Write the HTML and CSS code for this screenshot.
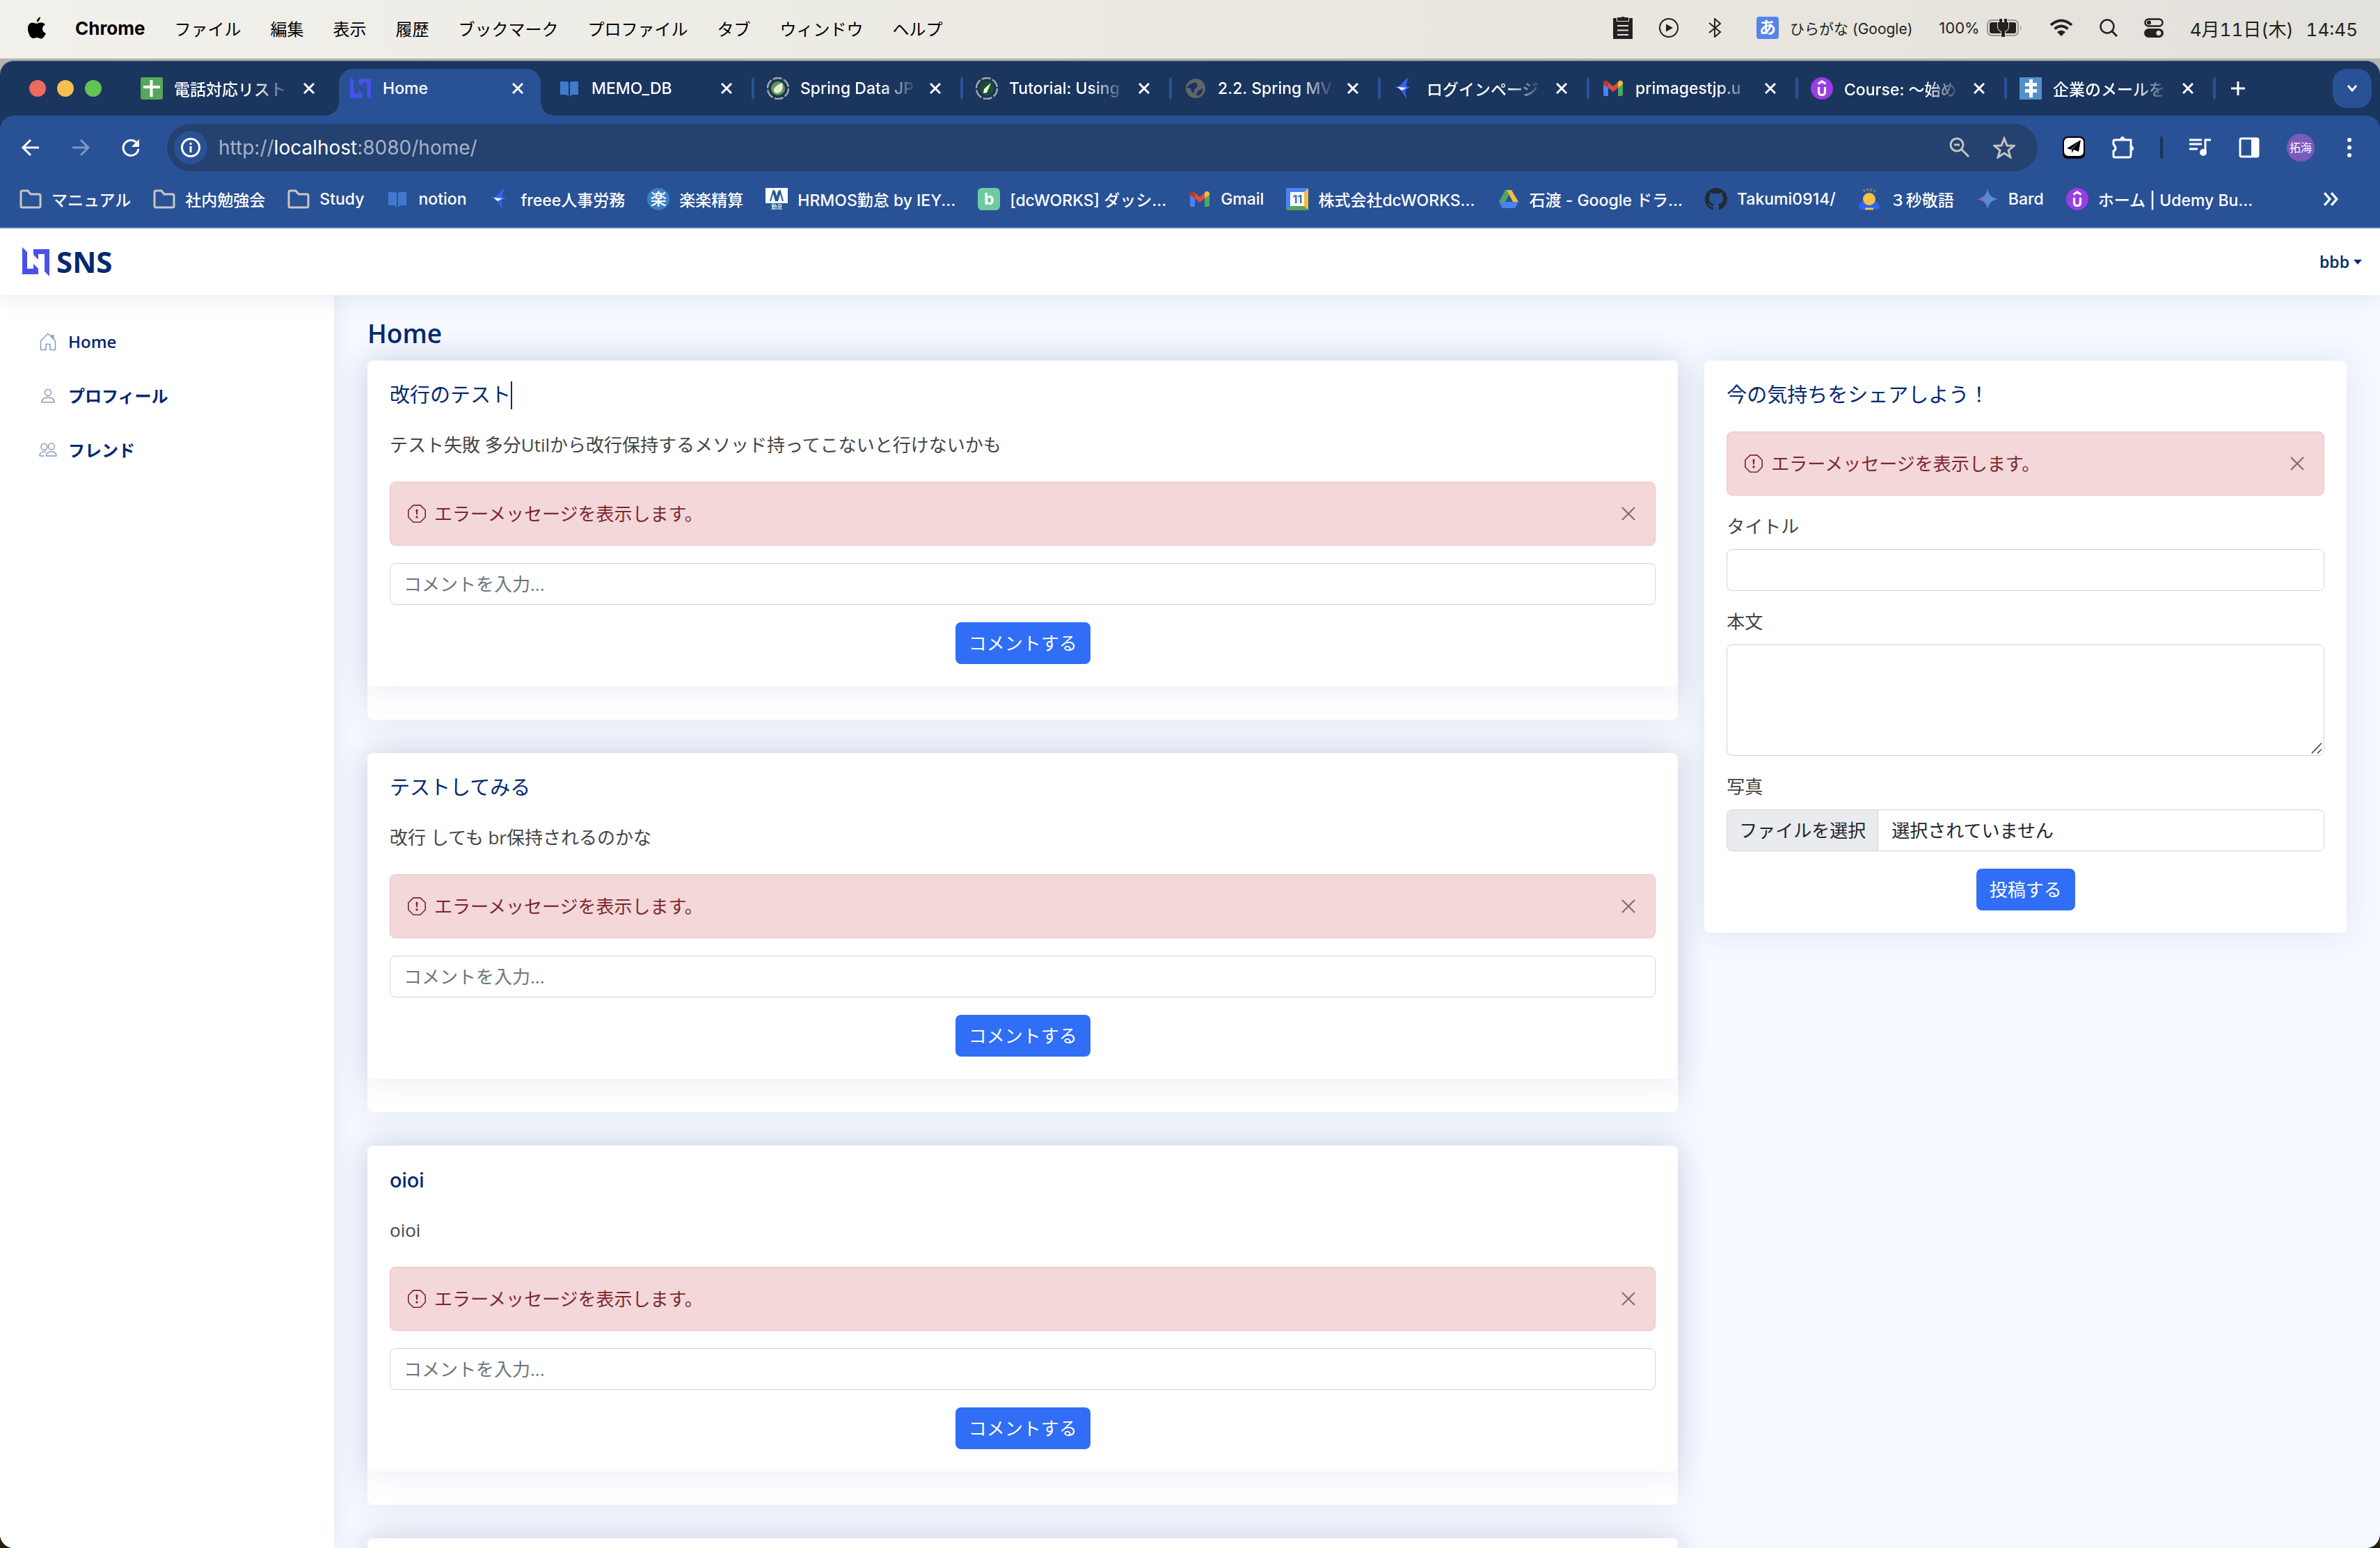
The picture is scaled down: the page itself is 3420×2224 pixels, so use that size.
FILE: index.html
```html
<!DOCTYPE html>
<html lang="ja">
<head>
<meta charset="utf-8">
<title>Home</title>
<link rel="stylesheet" href="styles.css">
</head>
<body>
<svg class="sprite" aria-hidden="true">
  <defs>
    <linearGradient id="bard-fill" x1="0" x2="1"><stop offset=".1" stop-color="#9a62b8"/><stop offset=".6" stop-color="#4b93d6"/></linearGradient>
  </defs>
  <symbol id="i-close" viewBox="0 0 16 16"><path d="M1 1l14 14M15 1L1 15" fill="none" stroke="currentColor" stroke-width="3"/></symbol>
  <symbol id="i-logo" viewBox="0 0 39 42"><path fill="#4951ec" d="M0 0l7 7v24h9v-7l7 7v8H0zM16 3h23v39l-7-7V10H23v8l-7-7z"/></symbol>
  <symbol id="i-book" viewBox="0 0 32 32"><path fill="#4179cd" d="M3 6h9q3 0 3 3v19l-3-3H3zM29 6h-9q-3 0-3 3v19l3-3h9z"/></symbol>
  <symbol id="i-folder" viewBox="0 0 32 32"><path d="M2 26V6q0-2 2-2h8l4 5h12q2 0 2 2v15q0 2-2 2H4q-2 0-2-2z" fill="none" stroke="#c9c6c2" stroke-width="3"/></symbol>
  <symbol id="i-swallow" viewBox="0 0 32 32"><path fill="#3563ee" d="M22 0q-3 8-3 12l5 3-6 3q-1 5 2 13-6-6-9-14L2 14l8-2q6-8 12-12z"/><path fill="#fff" d="M6 14l13 1-7 4z"/></symbol>
  <symbol id="i-gmail" viewBox="0 0 32 32"><path fill="#4b83ec" d="M2 9l7 5v13H4q-2 0-2-2z"/><path fill="#53a758" d="M30 9l-7 5v13h5q2 0 2-2z"/><path fill="#e04c3c" d="M9 7l7 6 7-6v8l-7 6-7-6z"/><path fill="#b9362b" d="M2 8q1-4 5-3l2 2v8l-7-5z"/><path fill="#f3bd3b" d="M30 8q-1-4-5-3l-2 2v8l7-5z"/></symbol>
  <symbol id="i-udemy" viewBox="0 0 32 32"><circle cx="16" cy="16" r="16" fill="#9a3ee3"/><path d="M10.500 9.500l5.500-3.500 5.500 3.500M11.500 14v7q0 4.500 4.500 4.500t4.500-4.500v-7" fill="none" stroke="#fff" stroke-width="3.200"/></symbol>
  <symbol id="i-alert" viewBox="0 0 16 16"><path fill="currentColor" d="M4.540.146A.5.500 0 0 1 4.893 0h6.214a.5.500 0 0 1 .353.146l4.394 4.394a.5.500 0 0 1 .146.353v6.214a.5.500 0 0 1-.146.353l-4.394 4.394a.5.500 0 0 1-.353.146H4.893a.5.500 0 0 1-.353-.146L.146 11.460A.5.500 0 0 1 0 11.107V4.893a.5.500 0 0 1 .146-.353L4.540.146zM5.100 1 1 5.100v5.800L5.100 15h5.800l4.100-4.100V5.100L10.900 1H5.100z"/><path fill="currentColor" d="M7.002 11a1 1 0 1 1 2 0 1 1 0 0 1-2 0zM7.100 4.995a.905.905 0 1 1 1.800 0l-.35 3.507a.552.552 0 0 1-1.100 0L7.100 4.995z"/></symbol>
</svg>

<header class="menubar">
  <nav class="menubar-menus">
    <svg class="apple" viewBox="0 0 26 32"><path d="M18 0q0 5-5 8-1-5 5-8zM13 10q5-3 9-1 2 1 3 2-4 3-4 6 0 5 5 7-2 5-5 7-2 1-4 0-4-2-8 0-3 1-6-3Q-2 18 1 12q3-5 8-3z"/></svg>
    <strong>Chrome</strong><span>ファイル</span><span>編集</span><span>表示</span><span>履歴</span><span>ブックマーク</span><span>プロファイル</span><span>タブ</span><span>ウィンドウ</span><span>ヘルプ</span>
  </nav>
  <div class="menubar-status">
    <svg width="28" height="32" viewBox="0 0 28 32"><path d="M0 2h5v5h18V2h5v30H0z"/><path d="M6 1h5q3-2 6 0h5v5H6z"/><path d="M6 13h16M6 19.500h16M6 26h16" stroke="#e8e6df" stroke-width="2"/></svg>
    <svg width="28" height="28" viewBox="0 0 28 28"><circle cx="14" cy="14" r="13" fill="none" stroke="currentColor" stroke-width="2"/><path d="M10 8.500v11l10-5.500z"/></svg>
    <svg class="bluetooth" width="28" height="28" viewBox="0 0 28 28"><path d="M6 7l16 13-8 7V1l8 7L6 21" fill="none" stroke="currentColor" stroke-width="2"/></svg>
    <span class="ime"><b>あ</b>ひらがな (Google)</span>
    <span class="power">100%<svg width="52" height="26" viewBox="0 0 52 26"><rect x="1" y="2" width="44" height="22" rx="6" fill="none" stroke="#999892" stroke-width="2"/><rect x="4" y="5" width="38" height="16" rx="3"/><path d="M48 9q3 4 0 8z" fill="#999892"/><path d="M18 0h4v5h3V0h4v5h2v7q0 4-5 6v8h-5v-8q-5-2-5-6V5h2z" stroke="#e5e3dd" stroke-width="2" paint-order="stroke"/></svg></span>
    <svg width="34" height="26" viewBox="0 0 34 26"><path d="M2 9Q17-4 32 9M7.500 14.500q9.500-8 19 0" fill="none" stroke="currentColor" stroke-width="4"/><path d="M11 19q6-5 12 0l-6 6z"/></svg>
    <svg width="26" height="26" viewBox="0 0 26 26"><circle cx="11" cy="11" r="9.500" fill="none" stroke="currentColor" stroke-width="2.500"/><path d="M18 18l7 7" stroke="currentColor" stroke-width="3"/></svg>
    <svg width="28" height="28" viewBox="0 0 28 28"><rect x="1.500" y="1.500" width="25" height="10" rx="5" fill="none" stroke="currentColor" stroke-width="2.500"/><circle cx="7" cy="6.500" r="3"/><rect y="15" width="28" height="13" rx="6.500"/><circle cx="21" cy="21.500" r="3.500" fill="#e5e3dd"/></svg>
    <time class="clock"><span>4月11日(木)</span><span>14:45</span></time>
  </div>
</header>

<div class="window">
  <div class="tabstrip">
    <div class="lights"><i class="red"></i><i class="yellow"></i><i class="green"></i></div>
    <div class="tab"><svg class="ico" viewBox="0 0 32 32"><rect width="32" height="32" rx="3" fill="#58a65c"/><path d="M13.500 4h4v8H28v4H17.500v12h-4V16H4v-4h9.500z" fill="#fff"/></svg><span class="tab-title">電話対応リスト</span><button class="tab-close" aria-label="閉じる"><svg><use href="#i-close"/></svg></button></div>
    <div class="tab active"><svg class="ico"><use href="#i-logo"/></svg><span class="tab-title">Home</span><button class="tab-close" aria-label="閉じる"><svg><use href="#i-close"/></svg></button></div>
    <div class="tab sep"><svg class="ico"><use href="#i-book"/></svg><span class="tab-title">MEMO_DB</span><button class="tab-close" aria-label="閉じる"><svg><use href="#i-close"/></svg></button></div>
    <div class="tab sep"><svg class="ico" viewBox="0 0 32 32"><circle cx="16" cy="16" r="15" fill="none" stroke="#a3a9a8" stroke-width="2.500" stroke-dasharray="13 2.700"/><circle cx="16" cy="16" r="10" fill="#629b46"/><path fill="#e5eade" d="M22 8q3 14-8 15-5-1-4-6 2-5 12-9z"/></svg><span class="tab-title">Spring Data JP</span><button class="tab-close" aria-label="閉じる"><svg><use href="#i-close"/></svg></button></div>
    <div class="tab sep"><svg class="ico" viewBox="0 0 32 32"><circle cx="16" cy="16" r="15" fill="none" stroke="#a3a9a8" stroke-width="2.500" stroke-dasharray="13 2.700"/><circle cx="16" cy="16" r="10" fill="#1f5127"/><path fill="#fff" d="M22 8l-6 14-5 1 1-6z"/></svg><span class="tab-title">Tutorial: Using</span><button class="tab-close" aria-label="閉じる"><svg><use href="#i-close"/></svg></button></div>
    <div class="tab sep"><svg class="ico" viewBox="0 0 32 32"><circle cx="16" cy="16" r="14" fill="#636466"/><path fill="#1a355e" d="M7 11q6-5 10-3l2 5-4 4-2 6q-4-3-4-7l-6-1zM19 20l7-4q1 6-6 11l-3-2z"/></svg><span class="tab-title">2.2. Spring MV</span><button class="tab-close" aria-label="閉じる"><svg><use href="#i-close"/></svg></button></div>
    <div class="tab sep"><svg class="ico"><use href="#i-swallow"/></svg><span class="tab-title">ログインページ</span><button class="tab-close" aria-label="閉じる"><svg><use href="#i-close"/></svg></button></div>
    <div class="tab sep"><svg class="ico"><use href="#i-gmail"/></svg><span class="tab-title">primagestjp.u</span><button class="tab-close" aria-label="閉じる"><svg><use href="#i-close"/></svg></button></div>
    <div class="tab sep"><svg class="ico"><use href="#i-udemy"/></svg><span class="tab-title">Course: 〜始め</span><button class="tab-close" aria-label="閉じる"><svg><use href="#i-close"/></svg></button></div>
    <div class="tab sep"><svg class="ico" viewBox="0 0 32 32"><path fill="#5290cb" d="M0 0h32v32H0z"/><path d="M16.500 3v26M8 10.500h17M8 19.500h17" stroke="#fff" stroke-width="5"/></svg><span class="tab-title">企業のメールを</span><button class="tab-close" aria-label="閉じる"><svg><use href="#i-close"/></svg></button></div>
    <button class="new-tab" aria-label="新しいタブ"><svg viewBox="0 0 20 20"><path d="M10 0v20M0 10h20" stroke="currentColor" stroke-width="3"/></svg></button>
    <button class="tab-search" aria-label="タブを検索"><svg viewBox="0 0 16 16"><path d="M2 4l6 7 6-7" fill="none" stroke="currentColor" stroke-width="3"/></svg></button>
  </div>

  <div class="browserbar">
    <div class="toolbar">
      <div class="nav-buttons">
        <button aria-label="戻る"><svg class="ico" viewBox="0 0 32 32"><path d="M28 16H6M16 5L5 16l11 11" fill="none" stroke="currentColor" stroke-width="3"/></svg></button>
        <button class="dim" aria-label="進む"><svg class="ico" viewBox="0 0 32 32"><path d="M4 16h22M16 5l11 11-11 11" fill="none" stroke="currentColor" stroke-width="3"/></svg></button>
        <button aria-label="再読み込み"><svg class="ico" viewBox="0 0 32 32"><path d="M25 10a11 11 0 1 0 2 8" fill="none" stroke="currentColor" stroke-width="3"/><path d="M28 4v11H17z" fill="currentColor"/></svg></button>
      </div>
      <div class="omnibox">
        <span class="site-info"><svg viewBox="0 0 28 28"><circle cx="14" cy="14" r="12.500" fill="none" stroke="currentColor" stroke-width="3"/><path d="M14 12v9M14 7v3" stroke="currentColor" stroke-width="3"/></svg></span>
        <span class="url">http://<b>localhost</b>:8080/home/</span>
        <svg class="ico" viewBox="0 0 32 32"><circle cx="12" cy="12" r="9" fill="none" stroke="currentColor" stroke-width="3"/><path d="M8 12h8M18 18l11 11" stroke="currentColor" stroke-width="3"/></svg>
        <svg class="ico" viewBox="0 0 32 32"><path d="M16 3l4 10 10 .5-8 6.500 3 10-9-6-9 6 3-10-8-6.500L12 13z" fill="none" stroke="currentColor" stroke-width="3"/></svg>
      </div>
      <div class="extensions">
        <svg class="ico" viewBox="0 0 32 32"><rect width="32" height="32" rx="7" fill="#000"/><rect x="2" y="2" width="28" height="26" rx="6" fill="#fff"/><path d="M26 5L6 17l6 2zM26 5l-3 17-7-3-3 5v-5z"/></svg>
        <svg class="ico" viewBox="0 0 32 32"><path d="M5 5h23v22q0 3-3 3H5q-2 0-2-2v-7q6-2 0-10V7q0-2 2-2z" fill="none" stroke="#fff" stroke-width="3"/><path d="M12 4q4-8 8 0zM29 13q7 4 0 8z" fill="#fff"/></svg>
        <i class="bar"></i>
        <svg class="ico" viewBox="0 0 32 32"><path d="M0 5h18M0 11h18M0 18h12M23 24V5h8" fill="none" stroke="#fff" stroke-width="3"/><circle cx="20" cy="23" r="5" fill="#fff"/></svg>
        <svg class="ico" viewBox="0 0 32 32"><rect x="3" y="3" width="26" height="26" rx="2" fill="none" stroke="#fff" stroke-width="3"/><path fill="#fff" d="M19 3h10v26H19z"/></svg>
        <span class="avatar">拓海</span>
        <svg class="dots" viewBox="0 0 24 32" fill="#fff"><circle cx="12" cy="5" r="3"/><circle cx="12" cy="16" r="3"/><circle cx="12" cy="27" r="3"/></svg>
      </div>
    </div>
    <nav class="bookmarks">
      <a href="#"><svg class="ico"><use href="#i-folder"/></svg>マニュアル</a>
      <a href="#"><svg class="ico"><use href="#i-folder"/></svg>社内勉強会</a>
      <a href="#"><svg class="ico"><use href="#i-folder"/></svg>Study</a>
      <a href="#"><svg class="ico"><use href="#i-book"/></svg>notion</a>
      <a href="#"><svg class="ico"><use href="#i-swallow"/></svg>freee人事労務</a>
      <a href="#"><span class="ico raku">楽</span>楽楽精算</a>
      <a href="#"><span class="ico hrmos"><svg viewBox="0 0 32 22"><path d="M7 19l4-14 4 14M17 19l4-14 4 14M11 5h2l4 14M21 5h-2l-4 14" fill="none" stroke="#24588f" stroke-width="2"/></svg><small>勤怠</small></span>HRMOS勤怠 by IEY...</a>
      <a href="#"><span class="ico board">b</span>[dcWORKS] ダッシ...</a>
      <a href="#"><svg class="ico"><use href="#i-gmail"/></svg>Gmail</a>
      <a href="#"><span class="ico calendar">11</span>株式会社dcWORKS...</a>
      <a href="#"><svg class="ico" viewBox="0 0 32 32"><path fill="#53a758" d="M11 3h8L9 27 2 20z"/><path fill="#f3bd3b" d="M13 3h7l10 17h-8z"/><path fill="#4b83ec" d="M2 20h28l-5 9H7z"/><path fill="#295196" d="M16 11l5 9H11z"/></svg>石渡 - Google ドラ...</a>
      <a href="#"><svg class="ico" viewBox="0 0 16 16"><path fill="#24292f" d="M8 0C3.580 0 0 3.580 0 8c0 3.540 2.290 6.530 5.470 7.590.4.070.55-.17.55-.38 0-.19-.01-.82-.01-1.490-2.010.37-2.530-.49-2.690-.94-.09-.23-.48-.94-.82-1.130-.28-.15-.68-.52-.01-.53.63-.01 1.080.58 1.230.82.72 1.210 1.870.87 2.330.66.070-.52.28-.87.51-1.070-1.780-.2-3.640-.89-3.640-3.950 0-.87.310-1.590.82-2.150-.08-.2-.36-1.020.08-2.120 0 0 .67-.21 2.200.82.64-.18 1.320-.27 2-.27s1.360.09 2 .27c1.530-1.040 2.200-.82 2.200-.82.44 1.100.16 1.920.08 2.120.51.56.82 1.270.82 2.150 0 3.070-1.870 3.750-3.650 3.950.29.25.54.73.54 1.480 0 1.070-.01 1.930-.01 2.200 0 .21.15.46.55.38A8.010 8.010 0 0 0 16 8c0-4.420-3.580-8-8-8z"/></svg>Takumi0914/</a>
      <a href="#"><svg class="ico" viewBox="0 0 32 32"><path fill="#2f62f0" d="M1 27q1-7 8-9h14q7 2 8 9 0 4-4 4H5q-4 0-4-4z"/><circle cx="16" cy="16" r="9" fill="#f5c242"/><path stroke="#f5c242" stroke-width="3" d="M10 30h12"/><path fill="#8b8478" d="M6 2l5 1-2 3zM12 1h4l-2 5zM17 1h4l-3 5zM22 3l4 0-3 4z"/></svg>３秒敬語</a>
      <a href="#"><svg class="ico" viewBox="0 0 32 32"><path fill="url(#bard-fill)" d="M16 1q2 13 15 15-13 2-15 15Q14 18 1 16 14 14 16 1z"/></svg>Bard</a>
      <a href="#"><svg class="ico"><use href="#i-udemy"/></svg>ホーム | Udemy Bu...</a>
      <button class="more" aria-label="その他のブックマーク"><svg viewBox="0 0 20 18"><path d="M2 1l7 8-7 8M11 1l7 8-7 8" fill="none" stroke="currentColor" stroke-width="3"/></svg></button>
    </nav>
  </div>

  <div class="app">
    <header class="app-header">
      <a class="brand" href="#"><svg viewBox="0 0 39 42"><use href="#i-logo"/></svg>SNS</a>
      <button class="user">bbb<i></i></button>
    </header>
    <div class="app-body">
      <aside class="sidebar">
        <a href="#"><svg viewBox="0 0 26 26"><path d="M2.500 24.500V11.500L13 1.500l10.500 10v13h-7.500v-8h-6v8z" fill="none" stroke="currentColor" stroke-width="1.500"/><path d="M17.500 3h4v6.500l-4-4z" fill="currentColor"/></svg>Home</a>
        <a href="#"><svg viewBox="0 0 26 26"><circle cx="13" cy="8" r="4.500" fill="none" stroke="currentColor" stroke-width="1.500"/><path d="M4 22q0-7 9-7t9 7z" fill="none" stroke="currentColor" stroke-width="1.500" stroke-linejoin="round"/></svg>プロフィール</a>
        <a href="#"><svg viewBox="0 0 26 26"><g fill="none" stroke="currentColor" stroke-width="1.500" stroke-linejoin="round"><circle cx="7.500" cy="8" r="4.500"/><circle cx="18" cy="7.500" r="4.500"/><path d="M10.500 21q0-6 7.250-6T25 21zM10 15Q1 14 1 21h7"/></g></svg>フレンド</a>
      </aside>
      <main>
        <h1>Home</h1>
        <div class="columns">
          <div class="feed">
            <article class="post"><div class="card">
              <h2>改行のテスト<span class="caret"></span></h2>
              <p>テスト失敗 多分Utilから改行保持するメソッド持ってこないと行けないかも</p>
              <div class="alert"><svg><use href="#i-alert"/></svg>エラーメッセージを表示します。<button aria-label="閉じる"><svg viewBox="0 0 20 20"><path d="M1 1l18 18M19 1L1 19" stroke="currentColor" stroke-width="2"/></svg></button></div>
              <input class="field" type="text" placeholder="コメントを入力..." aria-label="コメント">
              <button class="btn">コメントする</button>
            </div></article>
            <article class="post"><div class="card">
              <h2>テストしてみる</h2>
              <p>改行 しても br保持されるのかな</p>
              <div class="alert"><svg><use href="#i-alert"/></svg>エラーメッセージを表示します。<button aria-label="閉じる"><svg viewBox="0 0 20 20"><path d="M1 1l18 18M19 1L1 19" stroke="currentColor" stroke-width="2"/></svg></button></div>
              <input class="field" type="text" placeholder="コメントを入力..." aria-label="コメント">
              <button class="btn">コメントする</button>
            </div></article>
            <article class="post"><div class="card">
              <h2 class="latin">oioi</h2>
              <p>oioi</p>
              <div class="alert"><svg><use href="#i-alert"/></svg>エラーメッセージを表示します。<button aria-label="閉じる"><svg viewBox="0 0 20 20"><path d="M1 1l18 18M19 1L1 19" stroke="currentColor" stroke-width="2"/></svg></button></div>
              <input class="field" type="text" placeholder="コメントを入力..." aria-label="コメント">
              <button class="btn">コメントする</button>
            </div></article>
            <article class="post"><div class="card"></div></article>
          </div>
          <form class="card share">
            <h2>今の気持ちをシェアしよう！</h2>
            <div class="alert"><svg><use href="#i-alert"/></svg>エラーメッセージを表示します。<button type="button" aria-label="閉じる"><svg viewBox="0 0 20 20"><path d="M1 1l18 18M19 1L1 19" stroke="currentColor" stroke-width="2"/></svg></button></div>
            <label for="title">タイトル</label>
            <input class="field" id="title" type="text">
            <label for="body">本文</label>
            <div class="area"><textarea class="field" id="body"></textarea><svg viewBox="0 0 16 26" preserveAspectRatio="none"><path d="M1 25L15 1M9 25l6-10" stroke="#555" stroke-width="2"/></svg></div>
            <label for="photo">写真</label>
            <label class="file" for="photo"><input id="photo" type="file"><span class="file-button">ファイルを選択</span><span class="file-name">選択されていません</span></label>
            <button class="btn" type="button">投稿する</button>
          </form>
        </div>
      </main>
    </div>
  </div>
</div>
</body>
</html>
```
FILE: styles.css
```css
* { box-sizing: border-box; }

body {
  margin: 0;
  height: 100vh;
  display: flex;
  flex-direction: column;
  overflow: hidden;
  background: linear-gradient(#b4b3ae 50%, #2a1d0e 50%);
  font-family: "Inter", "Noto Sans CJK JP", sans-serif;
  font-size: 23px;
}

button {
  padding: 0;
  border: 0;
  background: none;
  color: inherit;
  font: inherit;
  display: flex;
  align-items: center;
  justify-content: center;
}

a { color: inherit; text-decoration: none; }
svg { display: block; flex: none; }
.sprite { position: absolute; width: 0; height: 0; }
.ico { width: 32px; height: 32px; flex: none; }

/* macOS menu bar */
.menubar {
  flex: none;
  height: 84px;
  margin-bottom: 3px;
  padding: 0 32px 4px 40px;
  display: flex;
  align-items: center;
  justify-content: space-between;
  background: linear-gradient(90deg, #f1f0ea, #e8e6df 70%, #e3e1db);
  color: #000;
  white-space: nowrap;
}
.menubar-menus { display: flex; align-items: center; gap: 42px; font-size: 24px; }
.menubar-menus strong { font-size: 26px; }
.apple { width: 26px; height: 32px; }
.menubar-status { display: flex; align-items: center; gap: 38px; color: #232220; fill: #232220; }
.bluetooth { margin-right: 8px; }
.ime { display: flex; align-items: center; gap: 16px; font-size: 21px; }
.ime b {
  width: 32px;
  height: 32px;
  border-radius: 4px;
  background: #5583ea;
  color: #fff;
  font-size: 24px;
  line-height: 32px;
  text-align: center;
}
.power { display: flex; align-items: center; gap: 10px; font-size: 22px; }
.clock { display: flex; align-items: baseline; gap: 18px; font-size: 26px; font-variant-numeric: tabular-nums; }

/* Browser window */
.window {
  flex: 1;
  min-height: 0;
  display: flex;
  flex-direction: column;
  overflow: hidden;
  border-radius: 20px;
  border-top: 1px solid #5f7899;
  background: #1a355e;
  color: #fff;
}

.tabstrip { flex: none; height: 78px; padding: 11px 12px 0 42px; display: flex; font-weight: 500; }
.lights { flex: none; width: 140px; padding-bottom: 12px; display: flex; align-items: center; gap: 16px; }
.lights i { width: 24px; height: 24px; border-radius: 50%; }
.red { background: #ec6a5e; }
.yellow { background: #f4bf4f; }
.green { background: #61c554; }

.tab {
  position: relative;
  z-index: 0;
  flex: 0 1 300px;
  min-width: 0;
  padding: 0 30px 12px 20px;
  display: flex;
  align-items: center;
}
.tab-title {
  flex: 1;
  min-width: 0;
  margin: 0 18px 0 16px;
  overflow: hidden;
  white-space: nowrap;
  mask-image: linear-gradient(90deg, #000 70%, transparent);
}
.tab-close svg { width: 16px; height: 16px; }
.sep::after {
  content: "";
  position: absolute;
  right: -2px;
  top: 12px;
  width: 4px;
  height: 32px;
  border-radius: 2px;
  background: #295196;
}
.active::before {
  content: "";
  position: absolute;
  z-index: -1;
  inset: 0 5px;
  border-radius: 20px 20px 0 0;
  background: #295196;
}
.active::after {
  content: "";
  position: absolute;
  z-index: -1;
  left: -15px;
  right: -15px;
  bottom: 0;
  height: 20px;
  background:
    radial-gradient(circle at 0 0, transparent 20px, #295196 20px) left / 20px 20px no-repeat,
    radial-gradient(circle at 100% 0, transparent 20px, #295196 20px) right / 20px 20px no-repeat;
}
.active .tab-title { mask-image: none; }
.new-tab { width: 68px; padding-bottom: 12px; }
.new-tab svg { width: 20px; height: 20px; }
.tab-search { width: 56px; height: 56px; margin-left: auto; border-radius: 20px; background: #295196; }
.tab-search svg { width: 16px; height: 16px; }

.browserbar {
  flex: none;
  border-radius: 20px 20px 0 0;
  border-bottom: 2px solid #4f78b2;
  background: #295196;
}
.toolbar { padding: 12px 32px 0 28px; display: flex; align-items: center; gap: 36px; }
.nav-buttons { display: flex; gap: 40px; }
.dim { color: #7e97c1; }
.omnibox {
  flex: 1;
  height: 68px;
  padding: 0 32px 0 10px;
  display: flex;
  align-items: center;
  gap: 32px;
  border-radius: 34px;
  background: #24416f;
  color: #c4c2bf;
}
.site-info {
  width: 48px;
  height: 48px;
  display: grid;
  place-items: center;
  border-radius: 50%;
  background: #295196;
  color: #fff;
}
.site-info svg { width: 28px; height: 28px; }
.url { flex: 1; margin-left: -16px; font-size: 28px; color: #a7b3c7; }
.url b { color: #fff; font-weight: 400; }
.extensions { display: flex; align-items: center; gap: 38px; }
.bar { width: 4px; height: 32px; border-radius: 2px; background: #1a355e; }
.avatar {
  width: 40px;
  height: 40px;
  border-radius: 50%;
  background: #7a5abd;
  font-size: 16px;
  line-height: 40px;
  text-align: center;
}
.dots { width: 24px; height: 32px; }

.bookmarks {
  height: 80px;
  padding: 0 60px 0 28px;
  display: flex;
  align-items: center;
  gap: 32px;
  font-weight: 500;
  white-space: nowrap;
}
.bookmarks a { display: flex; align-items: center; gap: 14px; }
.raku { border-radius: 50%; background: #3a7fc4; line-height: 32px; text-align: center; }
.hrmos { background: linear-gradient(#fff 22px, #24588f 22px); }
.hrmos svg { width: 32px; height: 22px; }
.hrmos small { display: block; font-size: 8px; line-height: 10px; text-align: center; }
.board { border-radius: 6px; background: #6fcaa0; font-weight: 700; line-height: 32px; text-align: center; }
.calendar {
  border: solid;
  border-width: 6px;
  border-color: #4b83ec #f3bd3b #53a758 #4b83ec;
  border-radius: 3px;
  background: #fff;
  color: #3d69c8;
  font-size: 16px;
  font-weight: 700;
  line-height: 20px;
  text-align: center;
}
.more { margin-left: auto; }
.more svg { width: 22px; height: 20px; }

/* SNS application */
.app {
  flex: 1;
  min-height: 0;
  display: flex;
  flex-direction: column;
  overflow: hidden;
  background: #f6f9ff;
  color: #444;
  font-family: "Open Sans", "Noto Sans CJK JP", sans-serif;
  font-size: 26px;
  line-height: 38px;
}
.app-header {
  position: relative;
  z-index: 2;
  flex: none;
  height: 96px;
  padding: 0 26px 0 32px;
  display: flex;
  align-items: center;
  justify-content: space-between;
  background: #fff;
  box-shadow: 0 3px 32px rgba(1, 41, 112, .1);
  color: #012970;
}
.brand { display: flex; align-items: center; gap: 10px; font-size: 42px; font-weight: 700; }
.brand svg { width: 39px; height: 42px; }
.user { gap: 6px; font-size: 23px; font-weight: 600; }
.user i { border: 6px solid transparent; border-top: 7px solid #012970; border-bottom: 0; }
.app-body { flex: 1; min-height: 0; display: flex; }

.sidebar {
  position: relative;
  z-index: 1;
  flex: none;
  width: 480px;
  padding: 32px;
  display: flex;
  flex-direction: column;
  gap: 8px;
  background: #fff;
  box-shadow: 0 0 32px rgba(1, 41, 112, .1);
  color: #012970;
  font-size: 24px;
  font-weight: 600;
}
.sidebar a { height: 70px; padding: 0 24px; display: flex; align-items: center; gap: 16px; }
.sidebar svg { width: 26px; height: 26px; color: #899bbd; }

main { flex: 1; min-width: 0; padding: 32px 48px; }
h1 { margin: 0 0 16px; color: #012970; font-size: 37px; font-weight: 600; line-height: 46px; }
.columns { display: grid; grid-template-columns: repeat(12, 1fr); gap: 38px; align-items: start; }
.feed { grid-column: span 8; }
.share { grid-column: span 4; }

.card { padding: 32px; border-radius: 8px; background: #fff; box-shadow: 0 0 48px rgba(1, 41, 112, .1); }
.post { margin-bottom: 48px; padding-bottom: 48px; border-radius: 8px; background: #fff; box-shadow: 0 0 48px rgba(1, 41, 112, .1); }
h2 {
  margin: 0 0 34px;
  display: flex;
  align-items: center;
  height: 36px;
  color: #012970;
  font-family: "Inter", "Noto Sans CJK JP", sans-serif;
  font-size: 29px;
  font-weight: 400;
}
.latin { font-weight: 500; }
.caret { width: 2px; height: 40px; background: #012970; }
p { margin: 0 0 34px; }

.alert {
  margin-bottom: 25px;
  padding: 26px 28px 26px 25px;
  display: flex;
  align-items: center;
  gap: 12px;
  border: 1px solid #efc2c7;
  border-radius: 8px;
  background: #f3d7d9;
  color: #7c272f;
}
.alert > svg { width: 26px; height: 26px; }
.alert button { margin-left: auto; color: #7b6c6e; }
.alert button svg { width: 20px; height: 20px; }

.field {
  display: block;
  width: 100%;
  height: 60px;
  margin-bottom: 25px;
  padding: 0 19px;
  border: 1px solid #ced4da;
  border-radius: 8px;
  background: #fff;
  color: #212529;
  font: inherit;
}
.field::placeholder { color: #6c757d; }
.area { position: relative; }
textarea.field { height: 160px; resize: none; }
.area svg { position: absolute; right: 3px; bottom: 3px; width: 16px; height: 16px; }

.btn { height: 60px; margin: 0 auto; padding: 0 19px; border-radius: 8px; background: #306ef6; color: #fff; }
.share label { display: block; margin-bottom: 14px; }
.share .file {
  height: 60px;
  margin-bottom: 25px;
  display: flex;
  overflow: hidden;
  border: 1px solid #ced4da;
  border-radius: 8px;
  color: #212529;
  line-height: 58px;
}
.file input { position: absolute; width: 1px; height: 1px; opacity: 0; }
.file-button { padding: 0 17px; border-right: 1px solid #ced4da; background: #e9ebef; }
.file-name { padding: 0 19px; }
```
